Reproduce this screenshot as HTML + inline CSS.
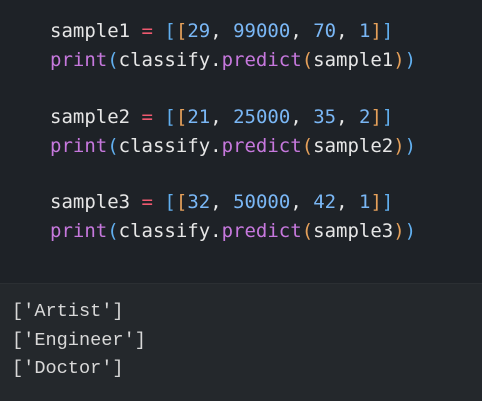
<html><head><style>
body{margin:0;width:482px;height:401px;background:#24282c;overflow:hidden;font-family:"DejaVu Sans Mono","Liberation Mono",monospace;}
#code{position:absolute;left:0;top:0;width:482px;height:283px;background:#1e2227;border-bottom:1px solid #2b2f33;}
.l{position:absolute;left:50px;font-size:19px;line-height:29px;color:#e6e6e6;white-space:pre;}
.o{position:absolute;left:12px;font-size:18.6px;line-height:28.5px;color:#d8d8d8;white-space:pre;font-family:"Liberation Mono",monospace;}
.r{color:#ef596f}.b{color:#61afef}.y{color:#e5a05a}.n{color:#7ab7f5}.p{color:#c678dd}
</style></head><body>
<div id="code">
<div class="l" style="top:17px">sample1 <span class="r">=</span> <span class="b">[</span><span class="y">[</span><span class="n">29</span>, <span class="n">99000</span>, <span class="n">70</span>, <span class="n">1</span><span class="y">]</span><span class="b">]</span></div>
<div class="l" style="top:46px"><span class="p">print</span><span class="b">(</span>classify.<span class="p">predict</span><span class="y">(</span>sample1<span class="y">)</span><span class="b">)</span></div>
<div class="l" style="top:103px">sample2 <span class="r">=</span> <span class="b">[</span><span class="y">[</span><span class="n">21</span>, <span class="n">25000</span>, <span class="n">35</span>, <span class="n">2</span><span class="y">]</span><span class="b">]</span></div>
<div class="l" style="top:132px"><span class="p">print</span><span class="b">(</span>classify.<span class="p">predict</span><span class="y">(</span>sample2<span class="y">)</span><span class="b">)</span></div>
<div class="l" style="top:188px">sample3 <span class="r">=</span> <span class="b">[</span><span class="y">[</span><span class="n">32</span>, <span class="n">50000</span>, <span class="n">42</span>, <span class="n">1</span><span class="y">]</span><span class="b">]</span></div>
<div class="l" style="top:217px"><span class="p">print</span><span class="b">(</span>classify.<span class="p">predict</span><span class="y">(</span>sample3<span class="y">)</span><span class="b">)</span></div>
</div>
<div class="o" style="top:298px">['Artist']</div>
<div class="o" style="top:327px">['Engineer']</div>
<div class="o" style="top:355px">['Doctor']</div>
</body></html>
